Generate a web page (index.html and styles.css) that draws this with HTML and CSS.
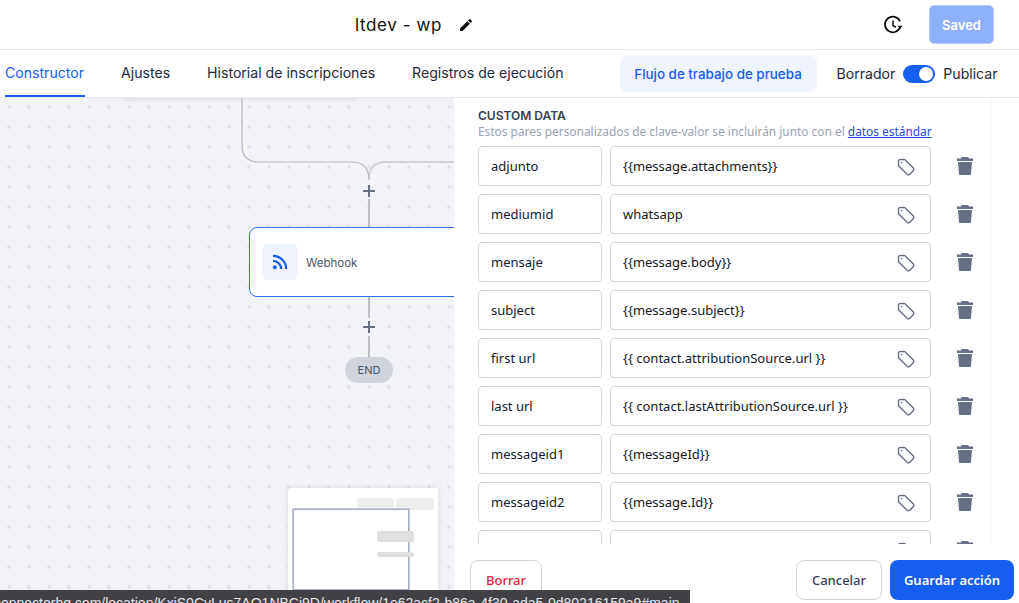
FILE: index.html
```html
<!doctype html>
<html lang="es">
<head>
  <meta charset="UTF-8">
  <title>ltdev - wp</title>
  <link rel="stylesheet" href="styles.css">
</head>
<body>
  <svg class="defs" width="0" height="0">
    <symbol id="tag" viewBox="0 0 24 24">
      <path d="M9.568 3H5.25A2.25 2.25 0 0 0 3 5.25v4.318c0 .597.237 1.17.659 1.591l9.581 9.581c.699.699 1.78.872 2.607.33a18.095 18.095 0 0 0 5.223-5.223c.542-.827.369-1.908-.33-2.607L11.16 3.66A2.25 2.25 0 0 0 9.568 3z" fill="none" stroke="#667085" stroke-width="1.7" stroke-linejoin="round"/>
      <circle cx="6.6" cy="6.6" r="1" fill="#667085"/>
    </symbol>
    <symbol id="trash" viewBox="0 0 16 18">
      <path d="M5 0h6l1 1.5h4v2.5H0V1.500h4zM1 5h14l-1 12a1 1 0 0 1-1 1H3a1 1 0 0 1-1-1z" fill="#667085"/>
    </symbol>
  </svg>

  <div class="page">
    <header class="topbar">
      <h1 class="title">ltdev - wp</h1>
      <svg class="pencil" viewBox="0 0 24 24" width="16" height="16"><path d="M3 17.25V21h3.75L17.81 9.94l-3.75-3.75L3 17.25zM20.71 7.04c.39-.39.39-1.02 0-1.41l-2.34-2.34c-.39-.39-1.02-.39-1.41 0l-1.83 1.83 3.75 3.75 1.83-1.83z" fill="#111"/></svg>
      <svg class="history" viewBox="0 0 20 20" width="20" height="20">
        <path d="M17.300 11.500A7.800 7.800 0 1 1 17 6.500" fill="none" stroke="#111" stroke-width="1.800"/>
        <path d="M10 5.500V10.500l3 1.800" fill="none" stroke="#111" stroke-width="1.600"/>
        <path d="M14.600 10.800h5l-2.500 2.900z" fill="#111"/>
      </svg>
      <button class="saved">Saved</button>
    </header>

    <nav class="tabs">
      <a class="tab on">Constructor</a>
      <a class="tab">Ajustes</a>
      <a class="tab">Historial de inscripciones</a>
      <a class="tab">Registros de ejecución</a>
      <button class="test">Flujo de trabajo de prueba</button>
      <span class="state">Borrador</span>
      <span class="switch"><i></i></span>
      <span class="state">Publicar</span>
    </nav>

    <main class="body">
      <section class="canvas">
        <div class="tab-shadow"></div>
        <svg class="wires" width="454" height="505" viewBox="0 98 454 505">
          <path d="M385 162H454M369 178C369 168 375 162 385 162" fill="none" stroke="#d0d2d8" stroke-width="2"/>
          <path d="M242 98V145C242 156 248 162 259 162H352C363 162 369 168 369 180" fill="none" stroke="#b4b6bd" stroke-width="1.200"/>
          <path d="M369 199V227M369 297V318M369 336V357" fill="none" stroke="#bcbec4" stroke-width="2"/>
        </svg>
        <span class="plus plus-a"></span>
        <span class="plus plus-b"></span>
        <div class="node">
          <span class="node-icon">
            <svg viewBox="0 0 16 16" width="16" height="16">
              <circle cx="2.800" cy="13.200" r="2" fill="#155eef"/>
              <path d="M1 6.800a8.200 8.200 0 0 1 8.200 8.200M1 1.800A13.200 13.200 0 0 1 14.200 15" fill="none" stroke="#155eef" stroke-width="2.200"/>
            </svg>
          </span>
          <span class="node-name">Webhook</span>
        </div>
        <span class="end">END</span>
        <div class="minimap">
          <b class="mm-a"></b><b class="mm-b"></b>
          <div class="mm-view"></div>
          <b class="mm-c"></b><b class="mm-d"></b>
        </div>
      </section>

      <aside class="panel">
        <div class="scroll">
          <h2 class="head">CUSTOM DATA</h2>
          <p class="desc">Estos pares personalizados de clave-valor se incluirán junto con el <a href="#">datos estándar</a></p>
          <div class="row"><div class="box key">adjunto</div><div class="box val">{{message.attachments}}<svg class="tag"><use href="#tag"/></svg></div><svg class="bin"><use href="#trash"/></svg></div>
          <div class="row"><div class="box key">mediumid</div><div class="box val">whatsapp<svg class="tag"><use href="#tag"/></svg></div><svg class="bin"><use href="#trash"/></svg></div>
          <div class="row"><div class="box key">mensaje</div><div class="box val">{{message.body}}<svg class="tag"><use href="#tag"/></svg></div><svg class="bin"><use href="#trash"/></svg></div>
          <div class="row"><div class="box key">subject</div><div class="box val">{{message.subject}}<svg class="tag"><use href="#tag"/></svg></div><svg class="bin"><use href="#trash"/></svg></div>
          <div class="row"><div class="box key">first url</div><div class="box val">{{ contact.attributionSource.url }}<svg class="tag"><use href="#tag"/></svg></div><svg class="bin"><use href="#trash"/></svg></div>
          <div class="row"><div class="box key">last url</div><div class="box val">{{ contact.lastAttributionSource.url }}<svg class="tag"><use href="#tag"/></svg></div><svg class="bin"><use href="#trash"/></svg></div>
          <div class="row"><div class="box key">messageid1</div><div class="box val">{{messageId}}<svg class="tag"><use href="#tag"/></svg></div><svg class="bin"><use href="#trash"/></svg></div>
          <div class="row"><div class="box key">messageid2</div><div class="box val">{{message.Id}}<svg class="tag"><use href="#tag"/></svg></div><svg class="bin"><use href="#trash"/></svg></div>
          <div class="row"><div class="box key"></div><div class="box val"><svg class="tag"><use href="#tag"/></svg></div><svg class="bin"><use href="#trash"/></svg></div>
        </div>
        <footer class="actions">
          <button class="btn danger">Borrar</button>
          <button class="btn cancel">Cancelar</button>
          <button class="btn save">Guardar acción</button>
        </footer>
      </aside>
    </main>
  </div>

  <div class="status">leconnectorhq.com/location/KxiS0CyLus7AO1NBCj9D/workflow/1e62acf2-b86a-4f30-ada5-0d80216159a9#main</div>
</body>
</html>
```

FILE: styles.css
```css
*{margin:0;
  padding:0;
  box-sizing:border-box;}
html,body{height:100%;
          overflow:hidden;}
body{font-family:"Inter","Liberation Sans",sans-serif;
     color:#101828;
     background:#fff;}
button{font-family:inherit;
       cursor:pointer;}
.defs{position:absolute;}
.page{height:603px;
      display:flex;
      flex-direction:column;}

/* top bar */
.topbar{height:50px;
        flex:none;
        display:flex;
        align-items:center;
        padding-left:355px;
        border-bottom:1px solid #e8e9ec;}
.title{font-size:17px;
       font-weight:400;
       color:#111;
       letter-spacing:.6px;}
.pencil{margin-left:16px;}
.history{margin-left:409px;}
.saved{width:65px;
       height:39px;
       margin-left:26px;
       background:#8fb0fb;
       border:1px solid #b9cdfb;
       border-radius:5px;
       color:#fff;
       font-size:13px;
       font-weight:600;}

/* tabs */
.tabs{height:48px;
      flex:none;
      display:flex;
      align-items:center;
      padding-left:5px;
      border-bottom:1px solid #e8e9ec;
      font-size:14.1px;}
.tab{height:47px;
     line-height:46px;
     padding-right:1px;
     margin-right:36px;
     color:#1d2939;}
.tab.on{color:#155eef;
        border-bottom:2px solid #155eef;}
.test{width:197px;
      height:37px;
      margin-left:19px;
      margin-right:20px;
      background:#eff4ff;
      border:0;
      border-radius:8px;
      color:#155eef;
      font-size:13.4px;
      font-weight:500;}
.state{color:#1d2939;
       font-size:14.1px;}
.switch{width:32px;
        height:18px;
        margin:0 8px;
        padding:2px;
        display:flex;
        justify-content:flex-end;
        background:#155eef;
        border-radius:9px;}
.switch i{width:14px;
          height:14px;
          background:#fff;
          border-radius:50%;}

/* canvas */
.body{flex:1;
      display:flex;
      min-height:0;}
.canvas{width:454px;
        flex:none;
        position:relative;
        overflow:hidden;
        background-color:#f2f3f7;
        background-image:radial-gradient(circle,#e3e4e8 1.6px,transparent 2.2px);
        background-size:20px 20px;
        background-position:-1px -1px;}
.tab-shadow{position:absolute;
            left:123px;
            top:-6px;
            width:235px;
            height:6px;
            box-shadow:0 1px 5px rgba(16,24,40,.1);}
.wires{position:absolute;
       left:0;
       top:0;}
.plus{position:absolute;
      left:363px;
      width:12px;
      height:12px;
      background:linear-gradient(#667085,#667085) center/100% 2px no-repeat,
                 linear-gradient(#667085,#667085) center/2px 100% no-repeat;}
.plus-a{top:87px;}
.plus-b{top:223px;}
.node{position:absolute;
      left:249px;
      top:129px;
      width:260px;
      height:70px;
      display:flex;
      align-items:center;
      padding-left:12px;
      background:#fff;
      border:1px solid #2f6fed;
      border-radius:8px;}
.node-icon{width:36px;
           height:36px;
           display:flex;
           align-items:center;
           justify-content:center;
           background:#eff4ff;
           border-radius:6px;}
.node-name{margin:1px 0 0 8px;
           font-size:11.5px;
           color:#475467;}
.end{position:absolute;
     left:345px;
     top:259px;
     width:48px;
     height:26px;
     line-height:26px;
     text-align:center;
     background:#d0d5dd;
     border-radius:13px;
     font-size:11px;
     color:#475467;}
.minimap{position:absolute;
         left:288px;
         top:390px;
         width:150px;
         height:120px;
         background:#fff;
         border-radius:3px;
         box-shadow:0 0 6px rgba(16,24,40,.1);}
.minimap b{position:absolute;
           background:#eee;
           border-radius:2px;}
.mm-a{left:69px;top:10px;width:37px;height:12px;}
.mm-b{left:108px;top:10px;width:38px;height:12px;}
.mm-c{left:89px;top:43px;width:37px;height:11px;background:#e0e0e0 !important;}
.mm-d{left:89px;top:64px;width:37px;height:5px;background:#e0e0e0 !important;}
.mm-view{position:absolute;
         left:5px;
         top:21px;
         width:116px;
         height:81px;
         border:1px solid #a3aec2;
         outline:1px solid #c5ccd8;}

/* side panel */
.panel{flex:1;
       display:flex;
       flex-direction:column;
       min-width:0;
       background:#fff;}
.scroll{height:446px;
        width:538px;
        padding:10px 0 0 24px;
        overflow:hidden;
        border-right:1px solid #f8f8f9;}
.head{font-size:12px;
      line-height:15px;
      font-weight:600;
      color:#344054;}
.desc{font-family:"Noto Sans",sans-serif;
      font-size:11.9px;
      line-height:16px;
      margin-bottom:7px;
      white-space:nowrap;
      color:#98a2b3;}
.desc a{color:#1d4ed8;}
.row{display:flex;
     align-items:center;
     margin-bottom:8px;}
.box{height:40px;
     display:flex;
     align-items:center;
     padding:0 12px;
     background:#fff;
     border:1px solid #d0d5dd;
     border-radius:4px;
     font-family:"Noto Sans",sans-serif;
     font-size:13px;
     color:#101828;}
.key{width:124px;
     margin-right:8px;}
.val{width:321px;
     justify-content:space-between;
     padding-right:14px;}
.tag{width:20px;
     height:20px;
     margin:2px 0 0 auto;}
.bin{width:16px;
     height:18px;
     margin-left:26px;}

/* footer */
.actions{flex:1;
         display:flex;
         align-items:flex-start;
         padding:16px 5px 0 16px;}
.btn{height:40px;
     border-radius:8px;
     font-family:"Noto Sans",sans-serif;
     font-size:13px;
     font-weight:500;}
.danger{width:72px;
        background:#fff;
        border:1px solid #d0d5dd;
        color:#e3243b;
        margin-right:auto;}
.cancel{width:86px;
        background:#fff;
        border:1px solid #d0d5dd;
        color:#344054;
        margin-right:8px;}
.save{width:124px;
      background:#155eef;
      border:0;
      color:#fff;
      font-weight:600;}

/* browser link preview */
.status{position:absolute;
        left:0;
        bottom:0;
        width:690px;
        height:13px;
        overflow:hidden;
        white-space:nowrap;
        padding-top:3px;
        text-indent:-17px;
        background:rgba(60,59,64,.97);
        color:#e8e8e8;
        font:14px/20px "Liberation Sans",sans-serif;}
```
